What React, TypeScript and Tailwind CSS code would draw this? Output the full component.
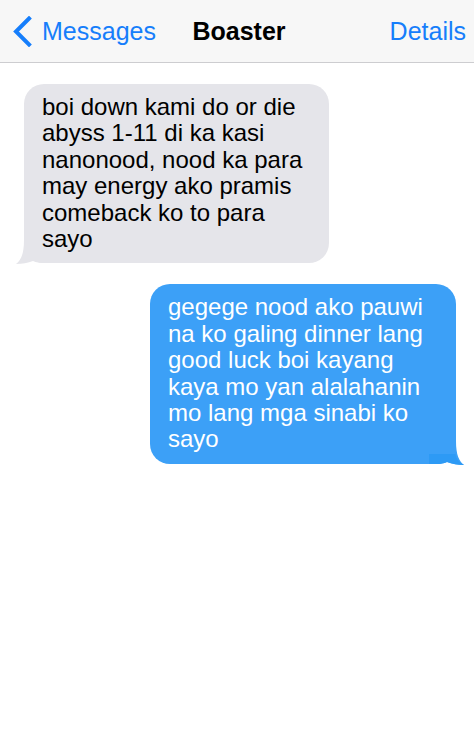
const font = { fontFamily: '"Liberation Sans", Arial, sans-serif' }

const GreyTail = () => (
  <svg className="absolute left-[-8px] bottom-[-1px]" width="30" height="24" viewBox="0 0 30 24">
    <path d="M8 0 C8 14 5 20 0 24 C6 24 12 23 17 21 C20 22.5 24 23 28 23 L28 0 Z" fill="#e5e5ea" />
  </svg>
)

const BlueTail = () => (
  <svg className="absolute right-[-8px] bottom-[-1px]" width="36" height="24" viewBox="0 0 36 24">
    <path d="M28 0 C28 14 31 20 36 24 C30 24 24 23 19 21 C16 22.5 12 23 8 23 L8 0 Z" fill="#3ca0f7" />
    <path d="M1 13 L27.5 13 C28 18 31 21 36 24 C30 24 24 23 19 21 C16 22.5 12 23 8 23 L1 23 Z" fill="#2d9af5" />
  </svg>
)

const App = () => {
  return (
    <div className="w-[474px] h-[751px] bg-white overflow-hidden" style={font}>
      <div className="grid grid-cols-[1fr_auto_1fr] items-center h-[63px] bg-[#f7f7f7] border-b border-[#cdcdd0] pl-[12px] pr-[8px]">
        <div className="flex items-center gap-[10px] text-[#167efb]">
          <svg width="20" height="31" viewBox="0 0 20 31">
            <path d="M17 2.5 L4 15.5 L17 28.5" fill="none" stroke="#167efb" strokeWidth="4" strokeLinecap="square" />
          </svg>
          <span className="text-[25px] leading-none">Messages</span>
        </div>
        <span className="text-[25px] leading-none font-bold text-black">Boaster</span>
        <span className="text-[25px] leading-none text-[#167efb] justify-self-end">Details</span>
      </div>

      <div className="flex flex-col pt-[21px] gap-[21px]">
        <div className="relative self-start ml-[24px] w-[305px] rounded-[20px] bg-[#e5e5ea] px-[18px] pt-[10px] pb-[11px] text-[24px] leading-[1.1] text-black">
          <GreyTail />
          <p className="relative">
            boi down kami do or die abyss 1-11 di ka kasi nanonood, nood ka para may energy ako pramis comeback ko to para sayo
          </p>
        </div>

        <div className="relative self-end mr-[18px] w-[306px] rounded-[20px] bg-[#3ca0f7] px-[18px] pt-[10px] pb-[11px] text-[24px] leading-[1.1] text-white">
          <BlueTail />
          <p className="relative">
            gegege nood ako pauwi na ko galing dinner lang good luck boi kayang kaya mo yan alalahanin mo lang mga sinabi ko sayo
          </p>
        </div>
      </div>
    </div>
  )
}

export default App
